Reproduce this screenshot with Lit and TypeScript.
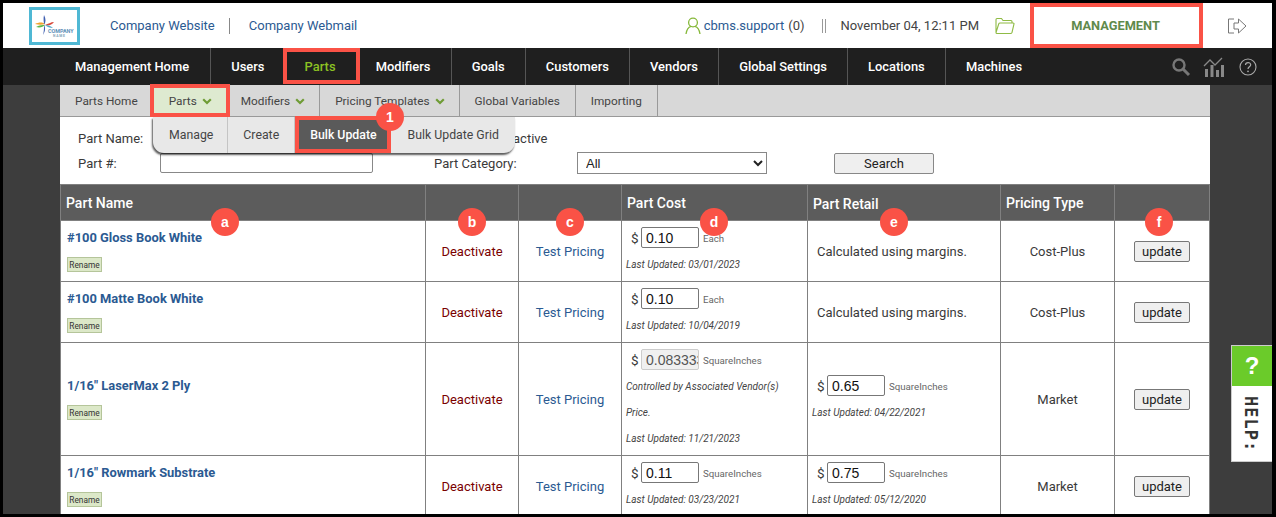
import { LitElement, html, css } from "lit";
import { customElement } from "lit/decorators.js";

const NAV = ["Management Home", "Users", "Parts", "Modifiers", "Goals", "Customers", "Vendors", "Global Settings", "Locations", "Machines"];
const BOXES = [
  { x: 283, y: 48, w: 77, h: 36 },
  { x: 150, y: 84, w: 80, h: 33 },
  { x: 295, y: 116, w: 96, h: 37 },
  { x: 1030, y: 3, w: 173, h: 45 },
];
const BADGES = [
  { t: "1", x: 390, y: 117 },
  { t: "a", x: 225, y: 222 },
  { t: "b", x: 472, y: 222 },
  { t: "c", x: 570, y: 222 },
  { t: "d", x: 714, y: 222 },
  { t: "e", x: 894, y: 222 },
  { t: "f", x: 1159, y: 222 },
];

const chevron = html`<svg class="chev" width="10" height="7" viewBox="0 0 10 7"><path d="M1.2 1.2 5 5 8.8 1.2" fill="none" stroke="#6f9c35" stroke-width="2.2"/></svg>`;

@customElement("app-root")
export class AppRoot extends LitElement {
  static styles = css`
    :host { display: block; position: relative; width: 1276px; height: 517px; overflow: hidden; box-sizing: border-box; border: solid #000; border-width: 3px 4px 3px 3px; background: #3d3d3d; font-family: Roboto, "Liberation Sans", sans-serif; color: #3a3a3a; font-size: 13px; }
    a { color: #2b5a92; text-decoration: none; }
    .top { height: 45px; background: #fff; display: flex; align-items: center; }
    .logo { margin-left: 26px; width: 51px; height: 38px; flex: none; display: block; }
    .sites { margin-left: 30px; display: flex; align-items: center; }
    .sep { width: 1px; height: 16px; background: #888; margin: 0 19px 0 14px; }
    .right { margin-left: auto; display: flex; align-items: center; }
    .user { display: flex; align-items: center; gap: 3px; }
    .user svg, .folder, .logout { display: block; }
    .count { margin-left: 4px; color: #444; }
    .bars { margin: 0 15px 0 17px; width: 4px; height: 14px; border: solid #999; border-width: 0 1px; box-sizing: border-box; }
    .date { color: #444; }
    .folder { margin-left: 16px; }
    .mgmt { width: 173px; margin-left: 15px; text-align: center; color: #5f8a4c; font-weight: 700; font-size: 12.8px; padding-right: 2px; box-sizing: border-box; }
    .logout { margin: 0 25px 0 24px; }
    .nav { height: 37px; background: #1f1f1f; display: flex; align-items: stretch; padding-left: 52px; }
    .nav .it { padding: 0 20.1px; display: flex; align-items: center; color: #fff; font-weight: 500; font-size: 12.9px; border-right: 1px solid #555; }
    .nav .it:first-child { padding-right: 21.1px; }
    .nav .it.on { color: #8cc123; }
    .nav .it.nb { border-right: none; }
    .tools { margin-left: auto; display: flex; align-items: center; gap: 12px; padding-right: 15px; }
    .tools svg { display: block; }
    .tools svg.q-i { margin-left: 2px; }
    .page { width: 1150px; margin-left: 57px; background: #fff; position: relative; }
    .sub { height: 31px; background: #d8d8d8; display: flex; align-items: stretch; border-bottom: 1px solid #999; }
    .sub .it { padding: 0 15px; display: flex; align-items: center; gap: 5px; font-size: 11.8px; color: #444; border-right: 1px solid #999; }
    .sub .it.nb { border-right: none; }
    .sub .it.ch { padding-right: 14px; }
    .sub .it.on { background: #deead0; border-right: none; padding: 0 14px 0 16px; }
    .chev { display: block; margin-top: 1px; }
    .drop { position: absolute; left: 93px; top: 32px; width: 362px; height: 36px; background: #e8e8e8; border-radius: 0 0 11px 11px; box-shadow: -1px 2px 2px rgba(0,0,0,.65); display: flex; align-items: stretch; z-index: 2; font-size: 12.3px; color: #444; }
    .drop span { display: flex; align-items: center; padding: 0 15px; border-right: 1px solid #c4c4c4; }
    .drop span:first-child { padding: 0 14px 0 16px; }
    .drop span.cur { background: #5a5a5a; color: #fff; border: none; padding: 0 11px; margin: 0 20px 0 4px; font-weight: 500; }
    .drop span.last { border: none; padding: 0; }
    .filter { height: 67px; box-sizing: border-box; padding: 9px 0 0 18px; display: grid; grid-template-columns: 82px 213px 61px 143px 190px 67px 100px; grid-template-rows: 24px 22px; row-gap: 2px; align-items: center; color: #3a3a3a; font-size: 13px; }
    .inactive { grid-column: 3 / span 2; grid-row: 1; margin-left: 140px; }
    .pn { grid-column: 1; grid-row: 2; }
    .text { height: 20px; box-sizing: border-box; border: 1px solid #888; border-radius: 2px; background: #fff; grid-column: 2; grid-row: 2; }
    .sel { height: 22px; box-sizing: border-box; border: 1px solid #888; background: #fff; font: 13px "Liberation Sans", sans-serif; color: #222; padding-left: 4px; margin: 0; width: 190px; border-radius: 0; grid-column: 5; grid-row: 2; }
    .cat { grid-column: 4; grid-row: 2; }
    .go { height: 21px; box-sizing: border-box; border: 1px solid #888; border-radius: 2px; background: #efefef; font: 13px Roboto, sans-serif; color: #222; padding: 0; width: 100px; grid-column: 7; grid-row: 2; }
    table { border-collapse: collapse; table-layout: fixed; width: 1149px; }
    th, td { border: 1px solid #808080; padding: 0; }
    th { height: 35px; background: #5c5c5c; color: #fff; font-weight: 500; font-size: 14px; text-align: left; padding: 0 5px; }
    th.low { padding-top: 2px; box-sizing: border-box; }
    td { vertical-align: top; background: #fff; }
    td.mid { vertical-align: middle; text-align: center; }
    td.calc { padding: 0 0 0 9px; text-align: left; }
    .r1 td { height: 60px; }
    .r3 td { height: 112px; }
    .r4 td { height: 60px; }
    .name { font-weight: 700; font-size: 12.9px; padding: 9px 0 0 6px; display: block; line-height: 15px; }
    .r3name { padding-top: 26px; }
    .rename { margin: 12px 0 0 6px; width: 35px; height: 15px; box-sizing: border-box; display: flex; align-items: center; justify-content: center; background: #dce8c8; border: 1px solid #b5c59a; font-size: 8.3px; color: #333; }
    .deact { color: #7a0000; }
    .price { display: flex; align-items: center; padding: 6px 0 0 9px; height: 21px; }
    .price b { font-weight: 400; font-size: 13.5px; width: 10px; flex: none; }
    .box { width: 58px; height: 21px; box-sizing: border-box; border: 1px solid #777; border-radius: 2px; font: 14px "Liberation Sans", sans-serif; color: #111; padding: 0 0 0 4px; margin: 0; flex: none; background: #fff; }
    .box:disabled { background: #f0f0f0; border-color: #ccc; color: #555; }
    .unit { font-size: 9.7px; color: #666; margin: 2px 0 0 4px; }
    .unit.each { margin-top: 1px; }
    .note { font-size: 10px; font-style: italic; color: #444; padding: 0 0 0 4px; line-height: 13px; margin-top: 10px; }
    .note.ctrl { line-height: 26px; margin-top: 4px; width: 170px; }
    .note.after { line-height: 26px; margin-top: 0; }
    .tall { padding-top: 26px; }
    .upd { width: 56px; height: 21px; box-sizing: border-box; border: 1px solid #777; border-radius: 2px; background: #efefef; font: 13px Roboto, sans-serif; color: #222; padding: 0; display: block; margin: 0 auto 0 19px; }
    .help { position: absolute; left: 1228px; top: 342px; width: 41px; height: 117px; box-sizing: border-box; border: 1px solid #ccc; border-right: none; background: #fff; z-index: 3; }
    .q { height: 40px; background: #6bcb2a; color: #fff; font: 700 24px "Liberation Sans", sans-serif; display: flex; align-items: center; justify-content: center; }
    .hl { padding: 10px 0 0 9px; writing-mode: vertical-rl; font: 700 17px "DejaVu Sans Mono", monospace; color: #333; letter-spacing: 1px; line-height: 20px; }
    .box-r { position: absolute; box-sizing: border-box; border: 4px solid #fa5246; z-index: 4; pointer-events: none; }
    .badge { position: absolute; width: 28px; height: 28px; margin: -14px 0 0 -14px; border-radius: 50%; background: #fa5246; color: #fff; font: 700 14px "Liberation Sans", sans-serif; display: flex; align-items: center; justify-content: center; z-index: 5; }
  `;

  private priceCell(val: string, unit: string, date: string, opts: { dis?: boolean; tall?: boolean; ctrl?: boolean } = {}) {
    return html`<td>
      <div class=${opts.tall ? "tall" : ""}>
        <div class="price"><b>$</b><input class="box" .value=${val} ?disabled=${!!opts.dis} /><span class="unit ${unit === "Each" ? "each" : ""}">${unit}</span></div>
        ${opts.ctrl
          ? html`<div class="note ctrl">Controlled by Associated Vendor(s) Price.</div><div class="note after">Last Updated: ${date}</div>`
          : html`<div class="note">Last Updated: ${date}</div>`}
      </div>
    </td>`;
  }

  private row(cls: string, name: string, cost: unknown, retail: unknown, type: string) {
    return html`<tr class=${cls}>
      <td><div class=${cls === "r3" ? "r3name" : ""}><a class="name" href="#">${name}</a><div class="rename">Rename</div></div></td>
      <td class="mid"><span class="deact">Deactivate</span></td>
      <td class="mid"><a href="#">Test Pricing</a></td>
      ${cost}${retail}
      <td class="mid">${type}</td>
      <td class="mid"><button class="upd">update</button></td>
    </tr>`;
  }

  render() {
    const calc = html`<td class="mid calc">Calculated using margins.</td>`;
    return html`
      <div class="top">
        <svg class="logo" viewBox="0 0 51 38">
          <rect x="1.5" y="1.5" width="48" height="35" fill="#fff" stroke="#4fb8d4" stroke-width="3"/>
          <path d="M6 17c4-2 8-2 10 0-3 1-6 1-10 0z" fill="#f2a12c"/>
          <path d="M7 20c4-2 6-2 9-2-2 2-5 3-9 2z" fill="#5bb84a"/>
          <path d="M15 8c-1 4 0 7 0 10 2-3 2-6 0-10z" fill="#3f5fb0"/>
          <path d="M14 28c1-4 1-7 1-10 2 3 1 7-1 10z" fill="#3f5fb0"/>
          <path d="M16 18c3-1 6-3 9-3-2 3-6 4-9 3z" fill="#d8483a"/>
          <path d="M16 18c3 0 6 1 8 3-3 0-6-1-8-3z" fill="#52a8c8"/>
          <text x="19" y="26" font-family="Roboto, sans-serif" font-size="5.4" font-weight="700" fill="#5d8fb8">COMPANY</text>
          <text x="24" y="29.800" font-family="Roboto, sans-serif" font-size="3.4" font-weight="700" letter-spacing=".8" fill="#7d9fb8">NAME</text>
        </svg>
        <div class="sites"><a href="#">Company Website</a><span class="sep"></span><a href="#">Company Webmail</a></div>
        <div class="right">
          <div class="user">
            <svg width="16" height="18" viewBox="0 0 16 18"><circle cx="8" cy="5.500" r="4.400" fill="none" stroke="#86b83a" stroke-width="1.300"/><path d="M1 17c.6-4 3-7 5-7.600M15 17c-.6-4-3-7-5-7.600" fill="none" stroke="#86b83a" stroke-width="1.300"/></svg>
            <a href="#">cbms.support</a>
          </div>
          <span class="count">(0)</span>
          <span class="bars"></span>
          <span class="date">November 04, 12:11 PM</span>
          <svg class="folder" width="20" height="18" viewBox="0 0 20 18"><path d="M1 15.500V2.500q0-1 1-1h4.500l1.500 2h8q1 0 1 1V6M1 15.500q0 1 1 1h13.500q1 0 1.500-1L19 7q.2-1-.8-1H5q-1 0-1.300 1L1 15.500z" fill="none" stroke="#8fbb45" stroke-width="1.100"/></svg>
          <div class="mgmt">MANAGEMENT</div>
          <svg class="logout" width="20" height="18" viewBox="0 0 20 18"><path d="M7 2H1.500v14H7M7 6h4.500V2L19 9l-7.500 7v-4H7z" fill="none" stroke="#777" stroke-width="1"/></svg>
        </div>
      </div>
      <div class="nav">
        ${NAV.map((n, i) => html`<div class="it ${n === "Parts" ? "on" : ""} ${n === "Machines" || i === 1 || i === 2 ? "nb" : ""}">${n}</div>`)}
        <div class="tools">
          <svg width="20" height="20" viewBox="0 0 20 20"><circle cx="8" cy="8" r="5.500" fill="none" stroke="#777" stroke-width="2.400"/><path d="M12 12l6 6" stroke="#777" stroke-width="3"/></svg>
          <svg width="22" height="20" viewBox="0 0 22 20"><path d="M1 9 7 3l5 5 7-7" fill="none" stroke="#888" stroke-width="1.300"/><path d="M2 12h3v8H2zM7.500 8h3v12h-3zM13 13h3v7h-3zM18 8h3v12h-3z" fill="#888"/></svg>
          <svg class="q-i" width="18" height="18" viewBox="0 0 18 18"><circle cx="9" cy="9" r="8" fill="none" stroke="#aaa" stroke-width="1.100"/><path d="M6.500 7c0-3.200 5.200-3.200 5.200-.2 0 2-2.700 2-2.700 4.200" fill="none" stroke="#aaa" stroke-width="1.200"/><circle cx="9" cy="13.300" r=".9" fill="#aaa"/></svg>
        </div>
      </div>
      <div class="page">
        <div class="sub">
          <div class="it nb">Parts Home</div>
          <div class="it ch on">Parts ${chevron}</div>
          <div class="it ch">Modifiers ${chevron}</div>
          <div class="it ch">Pricing Templates ${chevron}</div>
          <div class="it">Global Variables</div>
          <div class="it">Importing</div>
        </div>
        <div class="drop"><span>Manage</span><span>Create</span><span class="cur">Bulk Update</span><span class="last">Bulk Update Grid</span></div>
        <div class="filter">
          <span>Part Name:</span>
          <span class="inactive">active</span>
          <span class="pn">Part #:</span><div class="text"></div><span class="cat">Part Category:</span>
          <select class="sel"><option>All</option></select><button class="go">Search</button>
        </div>
        <table>
          <colgroup><col style="width:365px"/><col style="width:93px"/><col style="width:103px"/><col style="width:186px"/><col style="width:193px"/><col style="width:114px"/><col style="width:95px"/></colgroup>
          <tr><th>Part Name</th><th></th><th></th><th>Part Cost</th><th class="low">Part Retail</th><th>Pricing Type</th><th></th></tr>
          ${this.row("r1", "#100 Gloss Book White", this.priceCell("0.10", "Each", "03/01/2023"), calc, "Cost-Plus")}
          ${this.row("r1", "#100 Matte Book White", this.priceCell("0.10", "Each", "10/04/2019"), calc, "Cost-Plus")}
          ${this.row("r3", '1/16" LaserMax 2 Ply', this.priceCell("0.083333", "SquareInches", "11/21/2023", { dis: true, ctrl: true }), this.priceCell("0.65", "SquareInches", "04/22/2021", { tall: true }), "Market")}
          ${this.row("r4", '1/16" Rowmark Substrate', this.priceCell("0.11", "SquareInches", "03/23/2021"), this.priceCell("0.75", "SquareInches", "05/12/2020"), "Market")}
        </table>
      </div>
      <div class="help"><div class="q">?</div><div class="hl">HELP:</div></div>
      ${BOXES.map((b) => html`<div class="box-r" style="left:${b.x - 3}px;top:${b.y - 3}px;width:${b.w}px;height:${b.h}px"></div>`)}
      ${BADGES.map((b) => html`<div class="badge" style="left:${b.x - 3}px;top:${b.y - 3}px">${b.t}</div>`)}
    `;
  }
}
